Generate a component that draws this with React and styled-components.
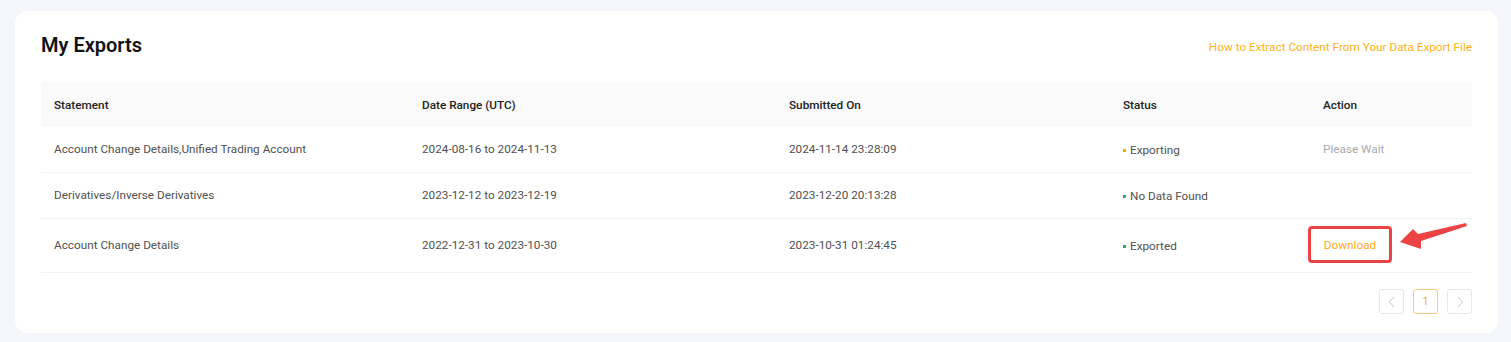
import React from 'react'
import styled, { createGlobalStyle } from 'styled-components'

const Global = createGlobalStyle`
  body {
    margin: 0;
    background: #f5f6fa;
    font-family: Roboto, "Noto Sans", Arial, sans-serif;
  }
`

const Page = styled.div`
  padding: 11px 13px 10px 15px;
`

const Card = styled.div`
  background: #fff;
  border-radius: 12px;
  padding: 20px 26px 19px 26px;
`

const TitleRow = styled.div`
  display: flex;
  align-items: center;
  justify-content: space-between;
  height: 28px;
  margin-bottom: 23px;
`

const Title = styled.h2`
  margin: 0;
  font-size: 20px;
  font-weight: 600;
  color: #121214;
`

const HelpLink = styled.a`
  font-size: 11.75px;
  color: #ffb11a;
  text-decoration: none;
  margin-top: 3px;
  cursor: pointer;
`

const Row = styled.div`
  display: grid;
  grid-template-columns: 368px 367px 334px 200px 1fr;
  align-items: center;
  height: ${p => p.$h}px;
  background: ${p => (p.$head ? '#fafafa' : '#fff')};
  border-bottom: ${p => (p.$head ? 'none' : '1px solid #f2f2f2')};
`

const Cell = styled.div`
  padding-left: 13px;
  font-size: 11.75px;
  font-weight: ${p => (p.$head ? 500 : 400)};
  color: ${p => (p.$head ? '#222' : '#505050')};
  white-space: nowrap;
  position: relative;
  margin-top: ${p => (p.$head ? 0 : -2)}px;
`

const Status = styled.span`
  display: inline-flex;
  align-items: center;
  gap: 4px;
  &::before {
    content: '';
    width: 3px;
    height: 3px;
    margin-top: 1px;
    background: ${p => p.$color};
  }
`

const Muted = styled.span`
  color: #aaa;
`

const DownloadBox = styled.span`
  display: inline-flex;
  align-items: center;
  justify-content: center;
  box-sizing: border-box;
  width: 84px;
  height: 37px;
  margin-left: -15px;
  border: 3px solid #ec4444;
  border-radius: 4px;
  color: #ffa91a;
  cursor: pointer;
`

const Arrow = styled.svg`
  position: absolute;
  left: 85px;
  top: -19px;
`

const Pager = styled.div`
  display: flex;
  justify-content: flex-end;
  gap: 9px;
  margin-top: 16px;
`

const PageBtn = styled.div`
  width: 25px;
  height: 25px;
  box-sizing: border-box;
  border: 1px solid ${p => (p.$active ? '#ffc87a' : '#e6e6e6')};
  border-radius: 3px;
  display: flex;
  align-items: center;
  justify-content: center;
  font-size: 11px;
  color: ${p => (p.$active ? '#ffa91a' : '#bbb')};
`

const rows = [
  {
    statement: 'Account Change Details,Unified Trading Account',
    range: '2024-08-16 to 2024-11-13',
    submitted: '2024-11-14 23:28:09',
    status: 'Exporting',
    color: '#f7a600',
    action: 'wait',
    h: 45,
  },
  {
    statement: 'Derivatives/Inverse Derivatives',
    range: '2023-12-12 to 2023-12-19',
    submitted: '2023-12-20 20:13:28',
    status: 'No Data Found',
    color: '#20b26c',
    action: null,
    h: 45,
  },
  {
    statement: 'Account Change Details',
    range: '2022-12-31 to 2023-10-30',
    submitted: '2023-10-31 01:24:45',
    status: 'Exported',
    color: '#20b26c',
    action: 'download',
    h: 53,
  },
]

const Chevron = ({ dir }) => (
  <svg width="8" height="12" viewBox="0 0 8 12">
    <path d={dir === 'left' ? 'M6 1 1.5 6 6 11' : 'M2 1 6.5 6 2 11'} fill="none" stroke="#c8c8c8" strokeWidth="1" />
  </svg>
)

function App() {
  return (
    <>
      <Global />
      <Page>
        <Card>
          <TitleRow>
            <Title>My Exports</Title>
            <HelpLink>How to Extract Content From Your Data Export File</HelpLink>
          </TitleRow>
          <Row $head $h={45}>
            <Cell $head>Statement</Cell>
            <Cell $head>Date Range (UTC)</Cell>
            <Cell $head>Submitted On</Cell>
            <Cell $head>Status</Cell>
            <Cell $head>Action</Cell>
          </Row>
          {rows.map(r => (
            <Row key={r.submitted} $h={r.h}>
              <Cell>{r.statement}</Cell>
              <Cell>{r.range}</Cell>
              <Cell>{r.submitted}</Cell>
              <Cell>
                <Status $color={r.color}>{r.status}</Status>
              </Cell>
              <Cell>
                {r.action === 'wait' && <Muted>Please Wait</Muted>}
                {r.action === 'download' && (
                  <>
                    <DownloadBox>Download</DownloadBox>
                    <Arrow width="80" height="50" viewBox="0 0 80 50">
                      <polygon points="5,35 18,22 23,27 71,16 72,19 26,34 26,42" fill="#ec4444" />
                    </Arrow>
                  </>
                )}
              </Cell>
            </Row>
          ))}
          <Pager>
            <PageBtn><Chevron dir="left" /></PageBtn>
            <PageBtn $active>1</PageBtn>
            <PageBtn><Chevron dir="right" /></PageBtn>
          </Pager>
        </Card>
      </Page>
    </>
  )
}

export default App
